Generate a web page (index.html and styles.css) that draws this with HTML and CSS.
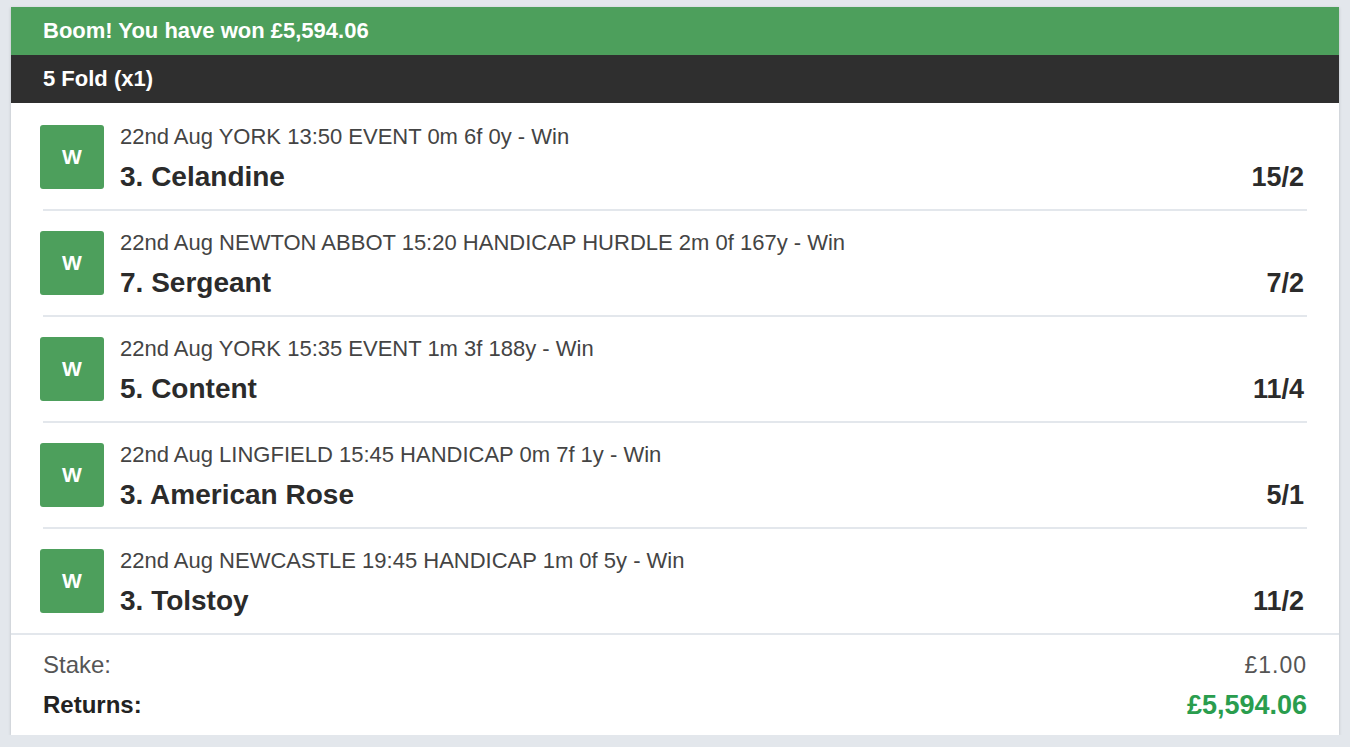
FILE: index.html
```html
<!DOCTYPE html>
<html>
<head>
<meta charset="utf-8">
<link rel="stylesheet" href="styles.css">
</head>
<body>
<div class="card">
  <div class="win-bar">Boom! You have won £5,594.06</div>
  <div class="type-bar">5 Fold (x1)</div>
  <div class="legs">
    <div class="leg">
      <div class="badge">W</div>
      <div class="info">
        <div class="meta">22nd Aug YORK 13:50 EVENT 0m 6f 0y - Win</div>
        <div class="line"><span class="name">3. Celandine</span><span class="odds">15/2</span></div>
      </div>
    </div>
    <div class="leg">
      <div class="badge">W</div>
      <div class="info">
        <div class="meta">22nd Aug NEWTON ABBOT 15:20 HANDICAP HURDLE 2m 0f 167y - Win</div>
        <div class="line"><span class="name">7. Sergeant</span><span class="odds">7/2</span></div>
      </div>
    </div>
    <div class="leg">
      <div class="badge">W</div>
      <div class="info">
        <div class="meta">22nd Aug YORK 15:35 EVENT 1m 3f 188y - Win</div>
        <div class="line"><span class="name">5. Content</span><span class="odds">11/4</span></div>
      </div>
    </div>
    <div class="leg">
      <div class="badge">W</div>
      <div class="info">
        <div class="meta">22nd Aug LINGFIELD 15:45 HANDICAP 0m 7f 1y - Win</div>
        <div class="line"><span class="name">3. American Rose</span><span class="odds">5/1</span></div>
      </div>
    </div>
    <div class="leg">
      <div class="badge">W</div>
      <div class="info">
        <div class="meta">22nd Aug NEWCASTLE 19:45 HANDICAP 1m 0f 5y - Win</div>
        <div class="line"><span class="name">3. Tolstoy</span><span class="odds">11/2</span></div>
      </div>
    </div>
  </div>
  <div class="summary">
    <div class="sum-row"><span class="stake-label">Stake:</span><span class="stake-val">£1.00</span></div>
    <div class="sum-row"><span class="ret-label">Returns:</span><span class="ret-val">£5,594.06</span></div>
  </div>
</div>
</body>
</html>
```
FILE: styles.css
```css
html, body {
  margin: 0;
  padding: 0;
}
body {
  background: #e3e7ec;
  font-family: "Liberation Sans", Arial, sans-serif;
  padding: 7px 11px 0 11px;
}
.card {
  background: #ffffff;
  box-shadow: 0 1px 3px rgba(0, 0, 0, 0.18);
}
.win-bar {
  background: #4d9f5c;
  color: #ffffff;
  font-weight: bold;
  font-size: 22px;
  height: 48px;
  line-height: 48px;
  padding: 0 32px;
}
.type-bar {
  background: #2f2f2f;
  color: #ffffff;
  font-weight: bold;
  font-size: 22px;
  height: 48px;
  line-height: 48px;
  padding: 0 32px;
}
.legs {
  padding: 2px 32px 0 32px;
}
.leg {
  display: flex;
  padding: 20px 3px 20px 0;
  border-bottom: 2px solid #e3e7ec;
}
.leg:last-child {
  border-bottom: none;
}
.badge {
  width: 64px;
  height: 64px;
  margin-left: -3px;
  background: #4d9f5c;
  border-radius: 3px;
  color: #ffffff;
  font-weight: bold;
  font-size: 21px;
  display: flex;
  align-items: center;
  justify-content: center;
  flex-shrink: 0;
}
.info {
  flex: 1;
  margin-left: 16px;
  height: 64px;
}
.meta {
  font-size: 22px;
  line-height: 24px;
  color: #444444;
}
.line {
  display: flex;
  justify-content: space-between;
  margin-top: 13px;
  line-height: 30px;
  color: #2b2b2b;
  font-weight: bold;
}
.name {
  font-size: 28px;
}
.odds {
  font-size: 27px;
}
.summary {
  border-top: 2px solid #e3e7ec;
  padding: 10px 32px;
}
.sum-row {
  display: flex;
  justify-content: space-between;
  line-height: 40px;
}
.stake-label {
  font-size: 24px;
  color: #555555;
}
.stake-val {
  font-size: 23px;
  color: #555555;
  letter-spacing: 1px;
}
.ret-label {
  font-size: 24px;
  font-weight: bold;
  color: #222222;
}
.ret-val {
  font-size: 27px;
  font-weight: bold;
  color: #2a9d4e;
}
```
